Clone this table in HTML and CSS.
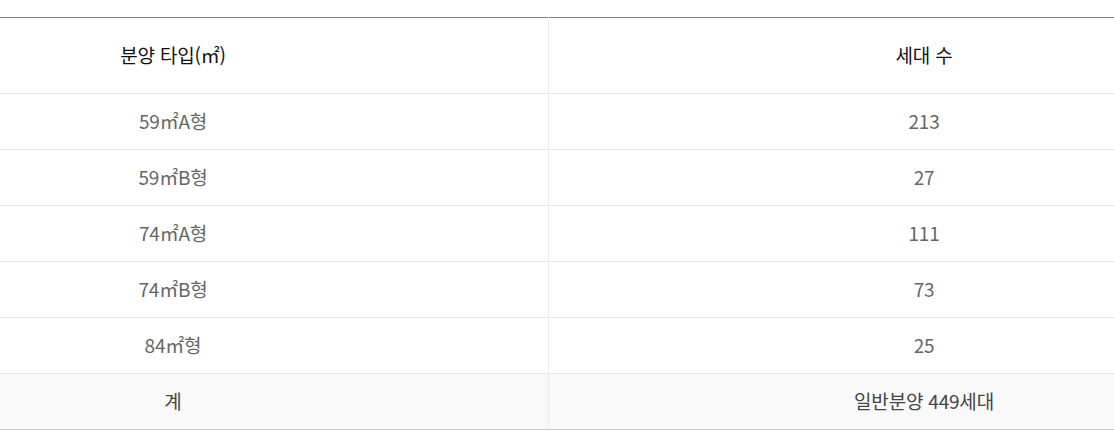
FILE: index.html
```html
<!DOCTYPE html>
<html lang="ko">
<head>
<meta charset="utf-8">
<link rel="stylesheet" href="styles.css">
</head>
<body>
<div class="wrap">
<table class="supply">
  <thead>
    <tr><th>분양 타입(㎡)</th><th>세대 수</th></tr>
  </thead>
  <tbody>
    <tr><td>59㎡A형</td><td>213</td></tr>
    <tr><td>59㎡B형</td><td>27</td></tr>
    <tr><td>74㎡A형</td><td>111</td></tr>
    <tr><td>74㎡B형</td><td>73</td></tr>
    <tr><td>84㎡형</td><td>25</td></tr>
  </tbody>
  <tfoot>
    <tr><td>계</td><td>일반분양 449세대</td></tr>
  </tfoot>
</table>
</div>
</body>
</html>
```
FILE: styles.css
```css
html, body {
  margin: 0;
  padding: 0;
  background: #fff;
  overflow: hidden;
}
.wrap {
  padding-top: 17px;
}
.supply {
  margin-left: -202px;
  width: 1501px;
  border-collapse: collapse;
  table-layout: fixed;
  font-family: "Noto Sans CJK KR", "Noto Sans", sans-serif;
  font-size: 19px;
  border-top: 1px solid #7b8085;
  border-bottom: 1px solid #cccccc;
}
.supply th,
.supply td {
  padding: 0 0 3px;
  text-align: center;
  vertical-align: middle;
  border-bottom: 1px solid #e6e6e6;
  border-left: 1px solid #ececec;
  letter-spacing: -0.2px;
}
.supply th:first-child,
.supply td:first-child {
  border-left: none;
}
.supply th {
  height: 72px;
  font-weight: 400;
  color: #111;
}
.supply tbody td {
  height: 52px;
  color: #666;
  font-weight: 400;
}
.supply tfoot td {
  height: 52px;
  background: #f9f9f9;
  color: #444;
  font-weight: 400;
  border-bottom: 1px solid #cccccc;
}
```
